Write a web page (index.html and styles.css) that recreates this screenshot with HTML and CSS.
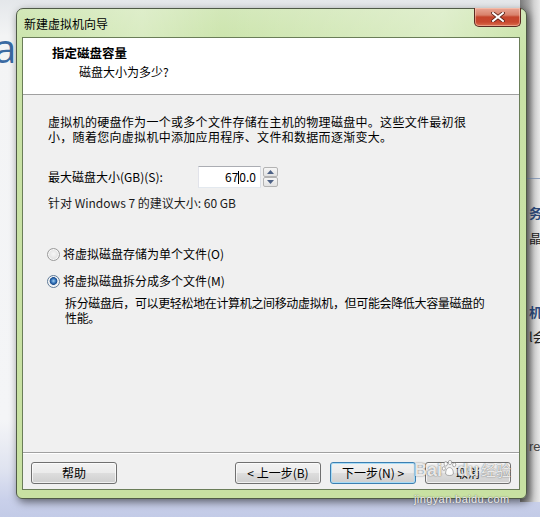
FILE: index.html
```html
<!DOCTYPE html>
<html lang="zh-CN">
<head>
<meta charset="utf-8">
<title>新建虚拟机向导</title>
<link rel="stylesheet" href="styles.css">
</head>
<body>
<div class="desk">
  <div class="bg-a">a</div>
  <div class="bg-right">
    <div class="bg-line"></div>
    <span class="frag f1">务</span>
    <span class="frag f2">晶上</span>
    <span class="frag f3">机</span>
    <span class="frag f4">l会</span>
    <span class="frag f5">re</span>
  </div>
  <div class="window">
    <div class="titlebar">
      <span class="title">新建虚拟机向导</span>
      <div class="close">
        <svg width="14" height="10" viewBox="0 0 14 10"><path d="M2 1 L12 9 M12 1 L2 9" stroke="#5a2016" stroke-width="3.6" stroke-linecap="square"/><path d="M2 1 L12 9 M12 1 L2 9" stroke="#ffffff" stroke-width="2" stroke-linecap="square"/></svg>
      </div>
    </div>
    <div class="client">
      <div class="header">
        <div class="h-title">指定磁盘容量</div>
        <div class="h-sub">磁盘大小为多少?</div>
      </div>
      <div class="body">
        <p class="intro">虚拟机的硬盘作为一个或多个文件存储在主机的物理磁盘中。这些文件最初很<br>小，随着您向虚拟机中添加应用程序、文件和数据而逐渐变大。</p>
        <div class="size-row">
          <span class="size-label">最大磁盘大小(GB)(S):</span>
          <div class="spin">
            <div class="spin-input">67<span class="caret"></span>0.0</div>
            <div class="spin-btns">
              <div class="sbtn"><svg width="7" height="4" viewBox="0 0 7 4"><path d="M0 4 L3.5 0 L7 4 Z" fill="#4d6185"/></svg></div>
              <div class="sbtn"><svg width="7" height="4" viewBox="0 0 7 4"><path d="M0 0 L3.5 4 L7 0 Z" fill="#4d6185"/></svg></div>
            </div>
          </div>
        </div>
        <div class="recommend">针对 Windows 7 的建议大小: 60 GB</div>
        <div class="radio-row r1"><span class="radio"></span><span>将虚拟磁盘存储为单个文件(O)</span></div>
        <div class="radio-row r2"><span class="radio checked"></span><span>将虚拟磁盘拆分成多个文件(M)</span></div>
        <p class="desc">拆分磁盘后，可以更轻松地在计算机之间移动虚拟机，但可能会降低大容量磁盘的<br>性能。</p>
      </div>
      <div class="footer">
        <button class="btn">帮助</button>
        <div class="spacer"></div>
        <button class="btn">&lt; 上一步(B)</button>
        <button class="btn default">下一步(N) &gt;</button>
        <button class="btn">取消</button>
      </div>
    </div>
  </div>
  <div class="watermark">
    <div class="wm-logo"><span>Bai</span><svg class="paw" width="15" height="17" viewBox="0 0 16 18"><g fill="rgba(255,255,255,0.85)" stroke="rgba(110,110,110,0.7)" stroke-width="0.8"><ellipse cx="4" cy="4" rx="1.8" ry="2.4"/><ellipse cx="8.5" cy="2.6" rx="1.8" ry="2.3"/><ellipse cx="13" cy="5" rx="1.7" ry="2.2"/><ellipse cx="2" cy="9" rx="1.6" ry="2"/><path d="M8 8 C5 8 3.5 12 4 15 C5 17 11 17 12 15 C12.5 12 11 8 8 8 Z"/></g></svg><span>du</span><span class="wm-cn">经验</span></div>
    <div class="wm-url">jingyan.baidu.com</div>
  </div>
</div>
</body>
</html>
```

FILE: styles.css
```css
* { box-sizing: border-box; }
html, body { margin: 0; padding: 0; }
body {
  width: 540px;
  height: 517px;
  overflow: hidden;
  font-family: "Noto Sans CJK SC", "Noto Sans", sans-serif;
  font-size: 12px;
  color: #000;
}
.desk {
  position: relative;
  width: 540px;
  height: 517px;
  overflow: hidden;
  background: linear-gradient(to bottom, #e4e7ea 0px, #f3f4f5 36px, #f4f5f7 420px, #dfe3f0 470px, #c9d0ea 500px, #c3cbe7 517px);
}
.bg-a {
  position: absolute;
  left: -6px;
  top: 28px;
  font-family: "Open Sans", sans-serif;
  font-size: 40px;
  line-height: 40px;
  color: #3a6aa2;
}
.bg-right {
  position: absolute;
  left: 520px;
  top: 0;
  width: 20px;
  height: 502px;
  background: linear-gradient(to right, #7c7c7c 0px, #a9a9a9 9px, #d2d2d2 14px, #e9e9e9 20px);
}
.bg-line {
  position: absolute;
  left: 0; right: 0;
  top: 178px;
  height: 1px;
  background: #8ea0bc;
}
.frag {
  position: absolute;
  left: 9px;
  font-size: 13px;
  line-height: 14px;
  color: #3a4a66;
  white-space: nowrap;
}
.f1 { top: 206px; font-weight: bold; color: #2c4a7a; }
.f2 { top: 231px; color: #222; }
.f3 { top: 305px; font-weight: bold; color: #2c4a7a; }
.f4 { top: 330px; color: #222; }
.f5 { top: 440px; color: #444; font-family: "Liberation Sans", sans-serif; }

.window {
  position: absolute;
  left: 16px;
  top: 8px;
  width: 511px;
  height: 491px;
  border: 1px solid #4f5a46;
  border-radius: 7px 7px 6px 6px;
  background: linear-gradient(to bottom, #d3e8b9 0px, #cde5ae 28px, #c9e2a6 60px, #c8e1a2 100%);
  box-shadow: 2px 3px 8px rgba(0,0,0,0.55);
  display: flex;
  flex-direction: column;
  padding: 0 6px 8px 5px;
}
.titlebar {
  position: relative;
  height: 28px;
  flex: none;
  display: flex;
  align-items: center;
  padding-left: 2px;
  background: linear-gradient(to right, rgba(255,255,255,0.0) 0px, rgba(255,255,255,0.25) 120px, rgba(255,255,255,0) 200px, rgba(255,255,255,0.3) 420px, rgba(255,255,255,0) 500px);
}
.title {
  font-size: 12px;
  line-height: 16px;
  color: #000;
  margin-top: 2px;
}
.close {
  position: absolute;
  right: -1px;
  top: -1px;
  width: 47px;
  height: 19px;
  border: 1px solid #5a2a22;
  border-top: none;
  border-radius: 0 0 5px 5px;
  background: linear-gradient(to bottom, #e9a796 0px, #d9826c 7px, #c5452c 9px, #c8482f 14px, #df7a58 19px);
  display: flex;
  align-items: center;
  justify-content: center;
  box-shadow: inset 0 0 0 1px rgba(255,210,190,0.5);
}
.close svg { display: block; }

.client {
  flex: 1;
  display: flex;
  flex-direction: column;
  border: 1px solid #6a7d58;
  background: #f0f0f0;
}
.header {
  height: 57px;
  flex: none;
  background: #fff;
  border-bottom: 1px solid #a0a0a0;
  padding: 7px 0 0 29px;
}
.h-title {
  font-weight: bold;
  font-size: 12.5px;
  line-height: 16px;
}
.h-sub {
  margin: 3px 0 0 27px;
  line-height: 16px;
}
.body {
  flex: 1;
  padding: 0 0 0 25px;
}
.intro {
  margin: 19px 0 0 0;
  line-height: 15px;
  letter-spacing: 0.3px;
}
.size-row {
  margin-top: 22px;
  height: 22px;
  display: flex;
  align-items: center;
}
.size-label {
  width: 150px;
  line-height: 16px;
}
.spin {
  display: flex;
  align-items: center;
  height: 22px;
}
.spin-input {
  width: 63px;
  height: 22px;
  border: 1px solid #abadb3;
  border-left-color: #e2e3ea;
  border-right-color: #dbdfe6;
  border-bottom-color: #e3e9ef;
  background: #fff;
  text-align: right;
  padding-right: 4px;
  line-height: 20px;
}
.caret {
  display: inline-block;
  width: 1px;
  height: 13px;
  background: #000;
  vertical-align: -2px;
}
.spin-btns {
  margin-left: 2px;
  width: 15px;
  height: 20px;
  display: flex;
  flex-direction: column;
}
.sbtn {
  flex: 1;
  border: 1px solid #b3b3b3;
  border-radius: 2px;
  background: linear-gradient(to bottom, #f6f6f6, #e2e2e2);
  display: flex;
  align-items: center;
  justify-content: center;
}
.sbtn svg { display: block; }
.recommend {
  margin-top: 7px;
  line-height: 16px;
  color: #1a1a1a;
}
.radio-row {
  display: flex;
  align-items: center;
  line-height: 16px;
  margin-left: -1px;
}
.r1 { margin-top: 35px; }
.r2 { margin-top: 11px; }
.radio {
  width: 13px;
  height: 13px;
  border-radius: 50%;
  border: 1px solid #9a9a9a;
  background: radial-gradient(circle at 50% 45%, #f6f6f6 0px, #e6e6e6 4px, #dcdcdc 6px, #f4f4f4 7px);
  margin-right: 3px;
  flex: none;
  box-shadow: inset 0 0 0 1px #f8f8f8;
}
.radio.checked {
  border-color: #5f7a97;
  background: radial-gradient(circle at 50% 45%, #9fd0f5 0px, #2e6db4 2.4px, #1f4e8c 3.6px, #dfe7ef 4.2px, #f4f4f4 6px);
}
.desc {
  margin: 6px 0 0 17px;
  line-height: 15px;
  letter-spacing: -0.35px;
}
.footer {
  flex: none;
  height: 37px;
  border-top: 1px solid #a0a0a0;
  box-shadow: inset 0 1px 0 #fff;
  display: flex;
  align-items: flex-start;
  padding: 9px 8px 0 8px;
  gap: 9px;
}
.spacer { flex: 1; }
.btn {
  width: 86px;
  height: 22px;
  border: 1px solid #707070;
  border-radius: 3px;
  background: linear-gradient(to bottom, #f2f2f2 0%, #ebebeb 48%, #dddddd 52%, #cfcfcf 100%);
  box-shadow: inset 0 0 0 1px rgba(255,255,255,0.7);
  font-family: "Noto Sans CJK SC", "Noto Sans", sans-serif;
  font-size: 12px;
  line-height: 18px;
  color: #000;
  padding: 0;
}
.btn.default {
  border-color: #3c7fb1;
  box-shadow: inset 0 0 0 1px #a9dcf6;
}
.watermark {
  position: absolute;
  left: 414px;
  top: 459px;
  white-space: nowrap;
  color: rgba(255,255,255,0.85);
  text-shadow: 0 0 1px rgba(80,80,80,0.8), 0 0 2px rgba(80,80,80,0.4);
}
.wm-logo {
  display: flex;
  align-items: flex-end;
  font-family: "Liberation Sans", sans-serif;
  font-weight: bold;
  font-size: 18px;
  line-height: 22px;
}
.paw { margin: 0 0 4px 0; }
.wm-cn {
  font-family: "Noto Sans CJK SC", sans-serif;
  font-weight: normal;
  font-size: 15px;
  margin-left: 2px;
}
.wm-url {
  font-family: "Liberation Sans", sans-serif;
  font-size: 11px;
  line-height: 14px;
  margin-top: 11px;
  letter-spacing: 0.4px;
  color: rgba(255,255,255,0.9);
}
```
